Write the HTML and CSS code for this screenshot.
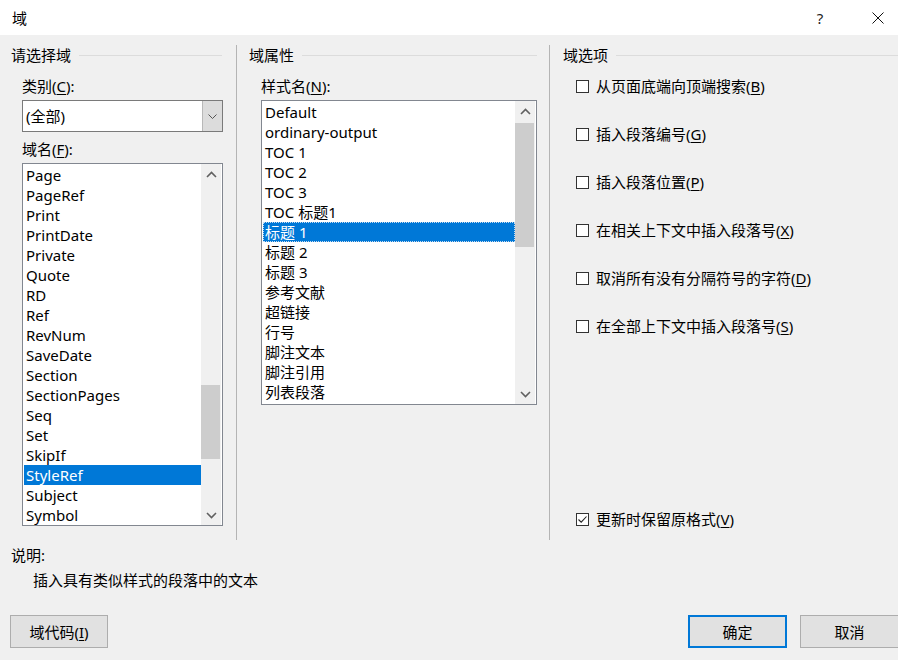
FILE: index.html
```html
<!DOCTYPE html>
<html lang="zh-CN">
<head>
<meta charset="utf-8">
<title>域</title>
<link rel="stylesheet" href="styles.css">
</head>
<body>
<div class="titlebar">
  <span class="title">域</span>
  <span class="tb-help">?</span>
  <span class="tb-close"><svg width="12" height="12" viewBox="0 0 12 12"><path d="M0.5 0.5 L11.5 11.5 M11.5 0.5 L0.5 11.5" stroke="#111" stroke-width="1"/></svg></span>
</div>

<div class="main">
  <section class="col col-1">
    <div class="group-head">请选择域</div>
    <div class="label first">类别(<u>C</u>):</div>
    <div class="combo">
      <span class="combo-text">(全部)</span>
      <span class="combo-btn"><svg width="9" height="5" viewBox="0 0 9 5"><path d="M0.5 0.5 L4.5 4.5 L8.5 0.5" fill="none" stroke="#555" stroke-width="1"/></svg></span>
    </div>
    <div class="label second">域名(<u>F</u>):</div>
    <div class="listbox list-fields">
      <div class="items">
        <div class="item">Page</div>
        <div class="item">PageRef</div>
        <div class="item">Print</div>
        <div class="item">PrintDate</div>
        <div class="item">Private</div>
        <div class="item">Quote</div>
        <div class="item">RD</div>
        <div class="item">Ref</div>
        <div class="item">RevNum</div>
        <div class="item">SaveDate</div>
        <div class="item">Section</div>
        <div class="item">SectionPages</div>
        <div class="item">Seq</div>
        <div class="item">Set</div>
        <div class="item">SkipIf</div>
        <div class="item selected">StyleRef</div>
        <div class="item">Subject</div>
        <div class="item">Symbol</div>
      </div>
      <div class="scrollbar">
        <div class="arrow"><svg width="11" height="7" viewBox="0 0 11 7"><path d="M1 6 L5.5 1.5 L10 6" fill="none" stroke="#606060" stroke-width="1.6"/></svg></div>
        <div class="track"><div class="thumb" style="margin-top:201px;height:74px"></div></div>
        <div class="arrow"><svg width="11" height="7" viewBox="0 0 11 7"><path d="M1 1 L5.5 5.5 L10 1" fill="none" stroke="#606060" stroke-width="1.6"/></svg></div>
      </div>
    </div>
  </section>

  <section class="col col-2">
    <div class="group-head">域属性</div>
    <div class="label first">样式名(<u>N</u>):</div>
    <div class="listbox list-styles">
      <div class="items">
        <div class="item">Default</div>
        <div class="item">ordinary-output</div>
        <div class="item">TOC 1</div>
        <div class="item">TOC 2</div>
        <div class="item">TOC 3</div>
        <div class="item">TOC 标题1</div>
        <div class="item selected focus">标题 1</div>
        <div class="item">标题 2</div>
        <div class="item">标题 3</div>
        <div class="item">参考文献</div>
        <div class="item">超链接</div>
        <div class="item">行号</div>
        <div class="item">脚注文本</div>
        <div class="item">脚注引用</div>
        <div class="item">列表段落</div>
      </div>
      <div class="scrollbar">
        <div class="arrow"><svg width="11" height="7" viewBox="0 0 11 7"><path d="M1 6 L5.5 1.5 L10 6" fill="none" stroke="#606060" stroke-width="1.6"/></svg></div>
        <div class="track"><div class="thumb" style="margin-top:2px;height:124px"></div></div>
        <div class="arrow"><svg width="11" height="7" viewBox="0 0 11 7"><path d="M1 1 L5.5 5.5 L10 1" fill="none" stroke="#606060" stroke-width="1.6"/></svg></div>
      </div>
    </div>
  </section>

  <section class="col col-3">
    <div class="group-head">域选项</div>
    <div class="options">
      <label class="check"><span class="box"></span>从页面底端向顶端搜索(<u>B</u>)</label>
      <label class="check"><span class="box"></span>插入段落编号(<u>G</u>)</label>
      <label class="check"><span class="box"></span>插入段落位置(<u>P</u>)</label>
      <label class="check"><span class="box"></span>在相关上下文中插入段落号(<u>X</u>)</label>
      <label class="check"><span class="box"></span>取消所有没有分隔符号的字符(<u>D</u>)</label>
      <label class="check"><span class="box"></span>在全部上下文中插入段落号(<u>S</u>)</label>
      <label class="check last"><span class="box"><svg width="11" height="11" viewBox="0 0 11 11"><path d="M1.5 5.5 L4.2 8.2 L9.5 2.5" fill="none" stroke="#222" stroke-width="1.1"/></svg></span>更新时保留原格式(<u>V</u>)</label>
    </div>
  </section>
</div>

<div class="desc">
  <div class="desc-label">说明:</div>
  <div class="desc-text">插入具有类似样式的段落中的文本</div>
</div>

<div class="buttons">
  <button class="btn">域代码(<u>I</u>)</button>
  <span class="spacer"></span>
  <button class="btn primary">确定</button>
  <button class="btn cancel">取消</button>
</div>
</body>
</html>
```

FILE: styles.css
```css
* { box-sizing: border-box; }

html, body {
  margin: 0;
  padding: 0;
}

body {
  width: 898px;
  height: 660px;
  overflow: hidden;
  background: #f0f0f0;
  color: #000;
  font-family: "Noto Sans", "Noto Sans CJK SC", sans-serif;
  font-size: 15px;
  line-height: 20px;
}

u { text-decoration: underline; text-underline-offset: 2px; }

/* title bar */
.titlebar {
  height: 35px;
  background: #fff;
  display: flex;
  align-items: center;
}
.title {
  padding-left: 12px;
  flex: 1;
  font-size: 15px;
}
.tb-help {
  width: 46px;
  text-align: center;
  margin-right: 15px;
  font-size: 15px;
  color: #222;
}
.tb-close {
  width: 40px;
  display: flex;
  justify-content: center;
}

/* main columns */
.main {
  display: grid;
  grid-template-columns: 237px 313px 1fr;
  margin-top: 10px;
  height: 495px;
}
.col {
  display: flex;
  flex-direction: column;
  align-items: flex-start;
}
.col-1 {
  border-right: 1px solid #b4b4b4;
  padding: 0 14px 0 11px;
}
.col-2 {
  border-right: 1px solid #b4b4b4;
  padding: 0 12px 0 12px;
}
.col-3 {
  padding: 0 0 11px 13px;
}

.group-head {
  align-self: stretch;
  display: flex;
  align-items: center;
  height: 20px;
}
.group-head::after {
  content: "";
  flex: 1;
  height: 1px;
  background: #dcdcdc;
  margin-left: 8px;
}

.label { height: 20px; }
.col-1 .label { margin-left: 11px; }
.col-2 .label { margin-left: 12px; }
.label.first { margin-top: 11px; }
.label.second { margin-top: 7px; }

/* combo */
.combo {
  margin: 4px 0 0 11px;
  width: 201px;
  height: 32px;
  border: 1px solid #7a7a7a;
  background: #fff;
  display: flex;
}
.combo-text {
  flex: 1;
  padding-left: 3px;
  line-height: 30px;
}
.combo-btn {
  width: 20px;
  background: #dcdcdc;
  border-left: 1px solid #b8b8b8;
  display: flex;
  align-items: center;
  justify-content: center;
}

/* list boxes */
.listbox {
  margin-top: 4px;
  border: 1px solid #828790;
  background: #fff;
  display: flex;
}
.list-fields {
  margin-left: 11px;
  width: 201px;
  height: 363px;
}
.list-styles {
  margin-left: 12px;
  width: 276px;
  height: 305px;
}
.items {
  flex: 1;
  padding-top: 1px;
  overflow: hidden;
}
.item {
  height: 20px;
  line-height: 20px;
  margin-left: 1px;
  padding-left: 2px;
  white-space: nowrap;
}
.item.selected {
  background: #0078d7;
  color: #fff;
}
.item.focus {
  outline: 1px dotted #c8dcf0;
  outline-offset: -1px;
}

.scrollbar {
  width: 20px;
  margin-right: 1px;
  background: #f0f0f0;
  display: flex;
  flex-direction: column;
}
.arrow {
  height: 20px;
  display: flex;
  align-items: center;
  justify-content: center;
}
.track { flex: 1; }
.thumb {
  background: #cdcdcd;
  width: 19px;
}

/* options */
.options {
  align-self: stretch;
  flex: 1;
  display: flex;
  flex-direction: column;
  margin-top: 11px;
  margin-left: 13px;
}
.check {
  display: flex;
  align-items: center;
  height: 20px;
  margin-bottom: 28px;
  white-space: nowrap;
}
.check.last {
  margin-top: auto;
  margin-bottom: 0;
}
.box {
  width: 13px;
  height: 13px;
  border: 1px solid #333;
  background: #fff;
  margin-right: 7px;
  display: flex;
  align-items: center;
  justify-content: center;
}

/* description */
.desc {
  margin-top: 5px;
  padding-left: 11px;
}
.desc-label { height: 20px; }
.desc-text {
  margin-top: 5px;
  padding-left: 22px;
  height: 20px;
}

/* buttons */
.buttons {
  margin-top: 25px;
  display: flex;
  padding-left: 10px;
}
.spacer { flex: 1; }
.btn {
  font: inherit;
  color: #000;
  height: 33px;
  width: 98px;
  background: #e1e1e1;
  border: 1px solid #adadad;
  padding: 0;
  margin: 0;
}
.btn.primary {
  width: 99px;
  border: 2px solid #0078d7;
}
.btn.cancel {
  width: 99px;
  margin-left: 13px;
  margin-right: -1px;
  flex-shrink: 0;
}
```
